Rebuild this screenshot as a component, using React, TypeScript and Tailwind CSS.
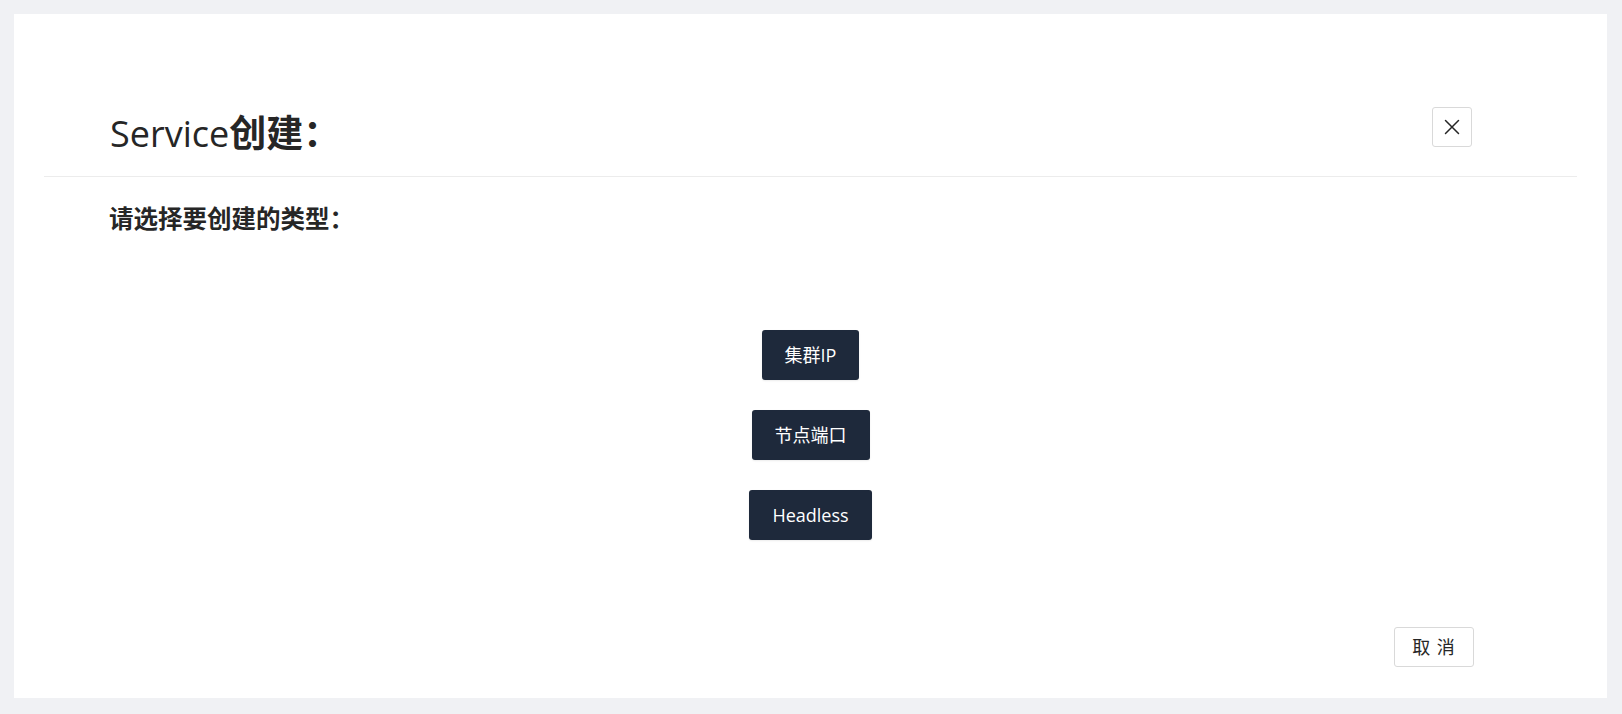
import React from "react";

const FONT = { fontFamily: '"Open Sans", "Noto Sans CJK SC", sans-serif' };

function CloseIcon() {
  return (
    <svg width="16" height="16" viewBox="0 0 16 16" fill="none">
      <path d="M1.5 1.5 L14.5 14.5 M14.5 1.5 L1.5 14.5" stroke="#262626" strokeWidth="1.5" strokeLinecap="round" />
    </svg>
  );
}

export default function App() {
  const types = ["集群IP", "节点端口", "Headless"];
  return (
    <div className="w-full h-[714px] bg-[#f0f1f4] p-[14px] pr-[15px] text-[#262626]" style={FONT}>
      <div className="bg-white h-[684px] flex flex-col">
        <div className="mx-[30px] h-[163px] border-b border-[#ececec] flex items-start justify-between pt-[93px] pl-[66px] pr-[105px]">
          <h1 className="mt-[6px] text-[36px] leading-[40px] font-normal whitespace-nowrap">
            <span>Service</span>
            <span className="font-bold text-[37px]">创建：</span>
          </h1>
          <button className="w-[40px] h-[40px] border border-[#d9d9d9] rounded-[3px] flex items-center justify-center bg-white">
            <CloseIcon />
          </button>
        </div>
        <h2 className="mt-[26px] pl-[95px] text-[24.5px] leading-[32px] font-bold">请选择要创建的类型：</h2>
        <div className="mt-[95px] flex flex-col items-center gap-[30px]">
          {types.map((t) => (
            <button
              key={t}
              className="h-[50px] px-[23px] bg-[#1e293b] text-white text-[18px] rounded-[3px] shadow-[0_1px_2px_rgba(0,0,0,0.08)]"
            >
              {t}
            </button>
          ))}
        </div>
        <div className="flex-1" />
        <div className="flex justify-end pr-[133px] pb-[31px]">
          <button className="w-[80px] h-[40px] border border-[#d9d9d9] rounded-[3px] bg-white text-[18px] tracking-[1px] text-[#262626]">
            取 消
          </button>
        </div>
      </div>
    </div>
  );
}
